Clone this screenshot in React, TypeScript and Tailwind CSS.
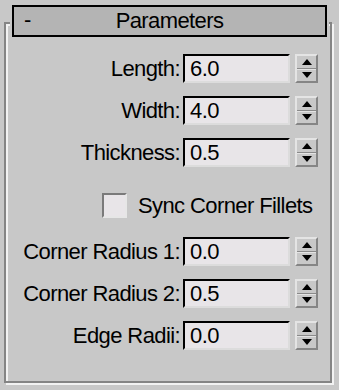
import React from "react";

const font = "font-['Liberation_Sans',Arial,sans-serif]";

function Spinner() {
    return (
        <div className="ml-[5px] flex h-[29px] w-[23px] flex-col border-t-2 border-l-2 border-r-2 border-b-2 border-t-[#e4e4e4] border-l-[#e4e4e4] border-r-[#858585] border-b-[#858585] bg-[#c8c8c8]">
            <div className="flex flex-1 items-center justify-center border-b border-[#8a8a8a]">
                <svg width="10" height="6" viewBox="0 0 10 6"><path d="M5 0L10 6H0Z" fill="#000" /></svg>
            </div>
            <div className="flex flex-1 items-center justify-center border-t border-[#e4e4e4]">
                <svg width="10" height="6" viewBox="0 0 10 6"><path d="M0 0H10L5 6Z" fill="#000" /></svg>
            </div>
        </div>
    );
}

function Row({ label, value }: { label: string; value: string }) {
    return (
        <div className="flex h-[29px] items-center justify-end pr-[12px]">
            <span className="mr-[3px] whitespace-nowrap leading-none">{label}</span>
            <div className="flex h-[29px] w-[107px] items-center border-t-2 border-l-2 border-r-2 border-b-2 border-t-black border-l-black border-r-[#dcdcdc] border-b-[#dcdcdc] bg-[#e8e5e8] pl-[5px] leading-none">
                {value}
            </div>
            <Spinner />
        </div>
    );
}

export default function App() {
    return (
        <div className={`h-[390px] w-[339px] overflow-hidden bg-[#c8c8c8] px-[4px] pt-[5px] text-[22px] tracking-[-0.6px] text-black ${font}`}>
            <div className="relative z-10 mx-[8px] flex h-[32px] w-[315px] items-center border-2 border-black bg-[#b4b4b4] ring-2 ring-[#c8c8c8]">
                <span className="absolute left-[10px] top-[2px] leading-none">-</span>
                <span className="w-full text-center leading-none">Parameters</span>
            </div>
            <div className="-mt-[15px] h-[361px] w-[328px] border-2 border-[#858585] pt-[30px] shadow-[inset_2px_2px_0_#f2f2f2,2px_2px_0_#f2f2f2]">
                <div className="flex flex-col gap-[13px]">
                    <Row label="Length:" value="6.0" />
                    <Row label="Width:" value="4.0" />
                    <Row label="Thickness:" value="0.5" />
                </div>
                <div className="mt-[26px] mb-[19px] flex h-[25px] items-center pl-[96px]">
                    <div className="h-[25px] w-[25px] border-t-2 border-l-2 border-r-2 border-b-2 border-t-[#7a7a7a] border-l-[#7a7a7a] border-r-[#e6e6e6] border-b-[#e6e6e6] bg-[#e8e5e8]" />
                    <span className="ml-[11px] whitespace-nowrap leading-none">Sync Corner Fillets</span>
                </div>
                <div className="flex flex-col gap-[13px]">
                    <Row label="Corner Radius 1:" value="0.0" />
                    <Row label="Corner Radius 2:" value="0.5" />
                    <Row label="Edge Radii:" value="0.0" />
                </div>
            </div>
        </div>
    );
}
